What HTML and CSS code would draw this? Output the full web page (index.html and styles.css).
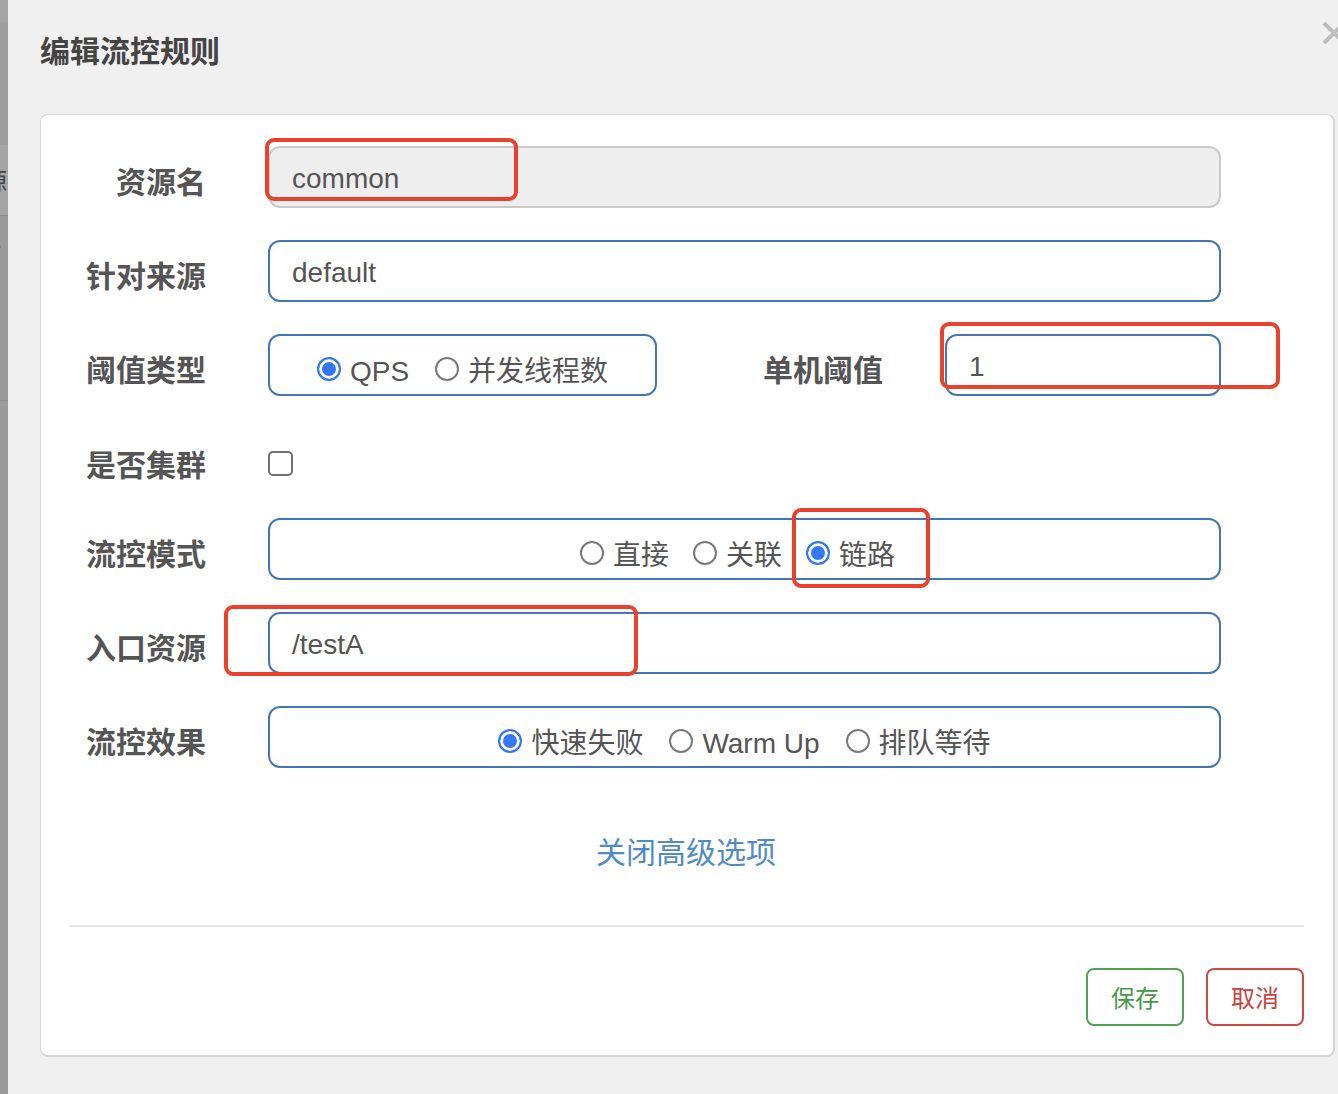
FILE: index.html
```html
<!DOCTYPE html>
<html lang="zh-CN">
<head>
<meta charset="utf-8">
<title>编辑流控规则</title>
<link rel="stylesheet" href="styles.css">
</head>
<body>
<div class="page">
  <div class="strip">
    <div class="strip-top"></div>
    <div class="strip-cell"><span class="strip-text">源</span></div>
    <div class="strip-row"><span class="strip-text small">r</span></div>
    <div class="strip-rest"></div>
  </div>
  <div class="modal">
    <div class="header">
      <h1 class="title">编辑流控规则</h1>
      <svg class="close" width="26" height="26" viewBox="0 0 26 26"><path d="M3 3 L23 23 M23 3 L3 23" stroke="#bdbdbd" stroke-width="4" fill="none"/></svg>
    </div>
    <div class="panel">
      <div class="form">
        <div class="row">
          <div class="label">资源名</div>
          <div class="field disabled"><span class="value">common</span></div>
        </div>
        <div class="row">
          <div class="label">针对来源</div>
          <div class="field"><span class="value">default</span></div>
        </div>
        <div class="row">
          <div class="label">阈值类型</div>
          <div class="field radios short">
            <span class="opt"><span class="radio on"></span>QPS</span>
            <span class="opt"><span class="radio"></span>并发线程数</span>
          </div>
          <div class="label label-mid">单机阈值</div>
          <div class="field small-field"><span class="value">1</span></div>
        </div>
        <div class="row row-check">
          <div class="label">是否集群</div>
          <span class="checkbox"></span>
        </div>
        <div class="row">
          <div class="label">流控模式</div>
          <div class="field radios mode">
            <span class="opt"><span class="radio"></span>直接</span>
            <span class="opt"><span class="radio"></span>关联</span>
            <span class="opt"><span class="radio on"></span>链路</span>
          </div>
        </div>
        <div class="row">
          <div class="label">入口资源</div>
          <div class="field"><span class="value">/testA</span></div>
        </div>
        <div class="row">
          <div class="label">流控效果</div>
          <div class="field radios">
            <span class="opt"><span class="radio on"></span>快速失败</span>
            <span class="opt"><span class="radio"></span>Warm Up</span>
            <span class="opt"><span class="radio"></span>排队等待</span>
          </div>
        </div>
      </div>
      <div class="toggle">关闭高级选项</div>
      <div class="divider"></div>
      <div class="footer">
        <button class="btn btn-save">保存</button>
        <button class="btn btn-cancel">取消</button>
      </div>
    </div>
  </div>
  <div class="mark mark-a"></div>
  <div class="mark mark-b"></div>
  <div class="mark mark-c"></div>
  <div class="mark mark-d"></div>
</div>
</body>
</html>
```

FILE: styles.css
```css
* { box-sizing: border-box; }
html, body {
  margin: 0;
  padding: 0;
  background: #f0f0f0;
  overflow: hidden;
}
.page {
  position: relative;
  display: flex;
  width: 1338px;
  height: 1094px;
  font-family: "Liberation Sans", "Noto Sans CJK SC", sans-serif;
  color: #555;
}
.strip {
  width: 8px;
  flex: none;
  display: flex;
  flex-direction: column;
  background: #9b9b9b;
  overflow: hidden;
}
.strip-top {
  height: 145px;
  background: #9e9e9e;
  border-top: 22px solid #a4a4a4;
}
.strip-cell {
  height: 71px;
  background: #a5a5a5;
  border-bottom: 1px solid #8c8c8c;
  display: flex;
  align-items: center;
}
.strip-row {
  height: 185px;
  border-bottom: 1px solid #8e8e8e;
  padding-top: 22px;
}
.strip-rest { flex: 1; }
.strip-text {
  font-family: "Noto Sans CJK SC", sans-serif;
  font-size: 24px;
  line-height: 24px;
  color: #444;
  margin-left: -17px;
}
.strip-text.small {
  font-family: "Liberation Sans", sans-serif;
  font-size: 20px;
  color: #555;
  margin-left: -6px;
}
.modal {
  flex: 1;
  display: flex;
  flex-direction: column;
}
.header {
  height: 114px;
  display: flex;
  justify-content: space-between;
  align-items: flex-start;
  padding-left: 32px;
}
.title {
  margin: 34px 0 0;
  font-family: "Noto Sans CJK SC", sans-serif;
  font-size: 30px;
  line-height: 30px;
  font-weight: 700;
  color: #444;
}
.close {
  margin-top: 20px;
  margin-right: -9px;
  flex: none;
}
.panel {
  margin-left: 32px;
  width: 1295px;
  height: 943px;
  background: #fff;
  border: 1px solid #d9d9d9;
  border-right: 2px solid #d6d6d6;
  border-bottom: 2px solid #d6d6d6;
  border-radius: 8px;
  display: flex;
  flex-direction: column;
}
.form {
  padding-top: 31px;
  display: flex;
  flex-direction: column;
  gap: 32px;
}
.row {
  height: 62px;
  display: flex;
  align-items: center;
}
.row-check {
  height: 58px;
  padding-top: 12px;
}
.label {
  width: 165px;
  margin-right: 62px;
  padding-top: 5px;
  text-align: right;
  font-family: "Noto Sans CJK SC", sans-serif;
  font-size: 30px;
  line-height: 30px;
  font-weight: 700;
  color: #555;
  flex: none;
}
.label-mid {
  width: 226px;
}
.row-check .label { padding-top: 0; }
.field {
  width: 953px;
  height: 62px;
  border: 2px solid #4377b4;
  border-radius: 12px;
  display: flex;
  align-items: center;
  padding-left: 22px;
  flex: none;
}
.field.disabled {
  background: #eeeeee;
  border-color: #cacaca;
}
.field.short { width: 389px; }
.small-field { width: 276px; }
.value {
  font-size: 28px;
  color: #555;
  line-height: 28px;
  padding-top: 4px;
}
.radios {
  justify-content: center;
  padding-left: 0;
  gap: 26px;
}
.radios.mode {
  padding-right: 14px;
  gap: 24px;
}
.opt {
  display: flex;
  align-items: center;
  gap: 9px;
  font-family: "Liberation Sans", "Noto Sans CJK SC", sans-serif;
  font-size: 28px;
  line-height: 28px;
  color: #555;
  padding-top: 4px;
  margin-top: 9px;
}
.radio {
  width: 24px;
  height: 24px;
  border-radius: 50%;
  border: 2px solid #7a7a7a;
  background: #fff;
  flex: none;
  margin-top: -6px;
}
.radio.on {
  border: 2px solid #3478f6;
  background: #3478f6;
  box-shadow: inset 0 0 0 3px #fff;
}
.checkbox {
  width: 25px;
  height: 25px;
  border: 2px solid #707070;
  border-radius: 5px;
  background: #fff;
  flex: none;
}
.toggle {
  margin-top: 67px;
  text-align: center;
  font-family: "Noto Sans CJK SC", sans-serif;
  font-size: 30px;
  line-height: 30px;
  color: #4f8ac9;
  padding-right: 2px;
}
.divider {
  margin: 60px 29px 0;
  height: 2px;
  background: #e4e4e4;
}
.footer {
  margin-top: 41px;
  display: flex;
  justify-content: flex-end;
  gap: 22px;
  padding-right: 29px;
}
.btn {
  width: 98px;
  height: 58px;
  border-radius: 8px;
  background: #fff;
  font-family: "Noto Sans CJK SC", sans-serif;
  font-size: 24px;
  line-height: 24px;
  padding: 0;
}
.btn-save {
  border: 2px solid #52a252;
  color: #47994a;
}
.btn-cancel {
  border: 2px solid #cf4848;
  color: #cc4040;
}
.mark {
  position: absolute;
  border: 4px solid #e9412b;
  border-radius: 9px;
}
.mark-a { left: 265px; top: 138px; width: 253px; height: 63px; }
.mark-b { left: 940px; top: 322px; width: 340px; height: 67px; }
.mark-c { left: 792px; top: 508px; width: 138px; height: 80px; }
.mark-d { left: 224px; top: 605px; width: 414px; height: 71px; }
```
